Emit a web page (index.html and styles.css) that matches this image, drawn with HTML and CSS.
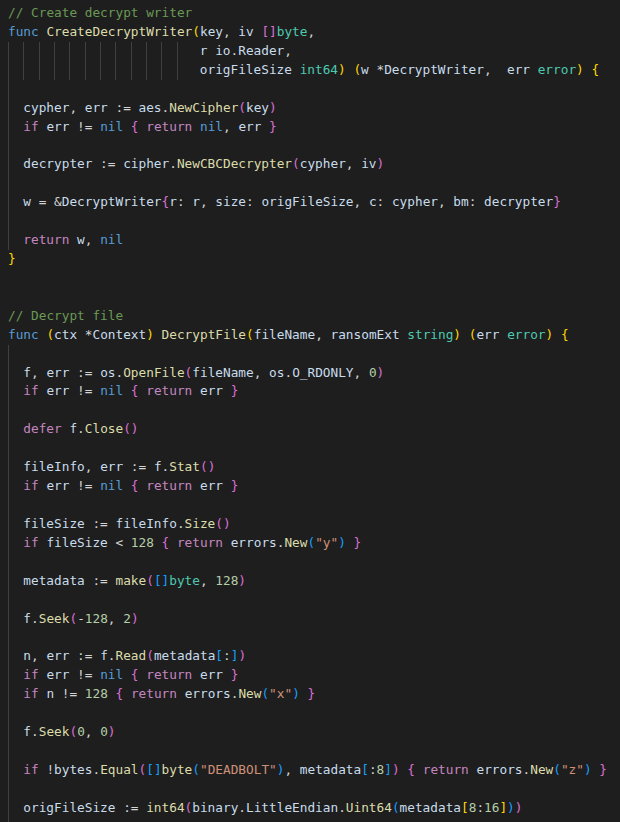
FILE: index.html
```html
<!DOCTYPE html>
<html>
<head>
<meta charset="utf-8">
<link rel="stylesheet" href="styles.css">
</head>
<body>
<div class="editor">
<div class="ln"><span class="c">// Create decrypt writer</span></div>
<div class="ln"><span class="k">func</span> <span class="f">CreateDecryptWriter</span><span class="b1">(</span><span class="v">key</span>, <span class="v">iv</span> <span class="b2">[]</span><span class="t">byte</span>,</div>
<div class="ln"><i class="g"></i><i class="g"></i><i class="g"></i><i class="g"></i><i class="g"></i><i class="g"></i><i class="g"></i><i class="g"></i><i class="g"></i><i class="g"></i><i class="g"></i><i class="g"></i> <span class="v">r</span> <span class="v">io</span>.<span class="v">Reader</span>,</div>
<div class="ln"><i class="g"></i><i class="g"></i><i class="g"></i><i class="g"></i><i class="g"></i><i class="g"></i><i class="g"></i><i class="g"></i><i class="g"></i><i class="g"></i><i class="g"></i><i class="g"></i> <span class="v">origFileSize</span> <span class="t">int64</span><span class="b1">)</span> <span class="b1">(</span><span class="v">w</span> *<span class="v">DecryptWriter</span>,  <span class="v">err</span> <span class="t">error</span><span class="b1">)</span> <span class="b1">{</span></div>
<div class="ln"><i class="g"></i></div>
<div class="ln"><i class="g"></i><span class="v">cypher</span>, <span class="v">err</span> := <span class="v">aes</span>.<span class="f">NewCipher</span><span class="b2">(</span><span class="v">key</span><span class="b2">)</span></div>
<div class="ln"><i class="g"></i><span class="x">if</span> <span class="v">err</span> != <span class="k">nil</span> <span class="b2">{</span> <span class="x">return</span> <span class="k">nil</span>, <span class="v">err</span> <span class="b2">}</span></div>
<div class="ln"><i class="g"></i></div>
<div class="ln"><i class="g"></i><span class="v">decrypter</span> := <span class="v">cipher</span>.<span class="f">NewCBCDecrypter</span><span class="b2">(</span><span class="v">cypher</span>, <span class="v">iv</span><span class="b2">)</span></div>
<div class="ln"><i class="g"></i></div>
<div class="ln"><i class="g"></i><span class="v">w</span> = &amp;<span class="v">DecryptWriter</span><span class="b2">{</span><span class="v">r</span>: <span class="v">r</span>, <span class="v">size</span>: <span class="v">origFileSize</span>, <span class="v">c</span>: <span class="v">cypher</span>, <span class="v">bm</span>: <span class="v">decrypter</span><span class="b2">}</span></div>
<div class="ln"><i class="g"></i></div>
<div class="ln"><i class="g"></i><span class="x">return</span> <span class="v">w</span>, <span class="k">nil</span></div>
<div class="ln"><span class="b1">}</span></div>
<div class="ln"></div>
<div class="ln"></div>
<div class="ln"><span class="c">// Decrypt file</span></div>
<div class="ln"><span class="k">func</span> <span class="b1">(</span><span class="v">ctx</span> *<span class="v">Context</span><span class="b1">)</span> <span class="f">DecryptFile</span><span class="b1">(</span><span class="v">fileName</span>, <span class="v">ransomExt</span> <span class="t">string</span><span class="b1">)</span> <span class="b1">(</span><span class="v">err</span> <span class="t">error</span><span class="b1">)</span> <span class="b1">{</span></div>
<div class="ln"><i class="g"></i></div>
<div class="ln"><i class="g"></i><span class="v">f</span>, <span class="v">err</span> := <span class="v">os</span>.<span class="f">OpenFile</span><span class="b2">(</span><span class="v">fileName</span>, <span class="v">os</span>.<span class="v">O_RDONLY</span>, <span class="n">0</span><span class="b2">)</span></div>
<div class="ln"><i class="g"></i><span class="x">if</span> <span class="v">err</span> != <span class="k">nil</span> <span class="b2">{</span> <span class="x">return</span> <span class="v">err</span> <span class="b2">}</span></div>
<div class="ln"><i class="g"></i></div>
<div class="ln"><i class="g"></i><span class="x">defer</span> <span class="v">f</span>.<span class="f">Close</span><span class="b2">()</span></div>
<div class="ln"><i class="g"></i></div>
<div class="ln"><i class="g"></i><span class="v">fileInfo</span>, <span class="v">err</span> := <span class="v">f</span>.<span class="f">Stat</span><span class="b2">()</span></div>
<div class="ln"><i class="g"></i><span class="x">if</span> <span class="v">err</span> != <span class="k">nil</span> <span class="b2">{</span> <span class="x">return</span> <span class="v">err</span> <span class="b2">}</span></div>
<div class="ln"><i class="g"></i></div>
<div class="ln"><i class="g"></i><span class="v">fileSize</span> := <span class="v">fileInfo</span>.<span class="f">Size</span><span class="b2">()</span></div>
<div class="ln"><i class="g"></i><span class="x">if</span> <span class="v">fileSize</span> &lt; <span class="n">128</span> <span class="b2">{</span> <span class="x">return</span> <span class="v">errors</span>.<span class="f">New</span><span class="b3">(</span><span class="s">"y"</span><span class="b3">)</span> <span class="b2">}</span></div>
<div class="ln"><i class="g"></i></div>
<div class="ln"><i class="g"></i><span class="v">metadata</span> := <span class="f">make</span><span class="b2">(</span><span class="b3">[]</span><span class="t">byte</span>, <span class="n">128</span><span class="b2">)</span></div>
<div class="ln"><i class="g"></i></div>
<div class="ln"><i class="g"></i><span class="v">f</span>.<span class="f">Seek</span><span class="b2">(</span>-<span class="n">128</span>, <span class="n">2</span><span class="b2">)</span></div>
<div class="ln"><i class="g"></i></div>
<div class="ln"><i class="g"></i><span class="v">n</span>, <span class="v">err</span> := <span class="v">f</span>.<span class="f">Read</span><span class="b2">(</span><span class="v">metadata</span><span class="b3">[</span>:<span class="b3">]</span><span class="b2">)</span></div>
<div class="ln"><i class="g"></i><span class="x">if</span> <span class="v">err</span> != <span class="k">nil</span> <span class="b2">{</span> <span class="x">return</span> <span class="v">err</span> <span class="b2">}</span></div>
<div class="ln"><i class="g"></i><span class="x">if</span> <span class="v">n</span> != <span class="n">128</span> <span class="b2">{</span> <span class="x">return</span> <span class="v">errors</span>.<span class="f">New</span><span class="b3">(</span><span class="s">"x"</span><span class="b3">)</span> <span class="b2">}</span></div>
<div class="ln"><i class="g"></i></div>
<div class="ln"><i class="g"></i><span class="v">f</span>.<span class="f">Seek</span><span class="b2">(</span><span class="n">0</span>, <span class="n">0</span><span class="b2">)</span></div>
<div class="ln"><i class="g"></i></div>
<div class="ln"><i class="g"></i><span class="x">if</span> !<span class="v">bytes</span>.<span class="f">Equal</span><span class="b2">(</span><span class="b3">[]</span><span class="f">byte</span><span class="b3">(</span><span class="s">"DEADBOLT"</span><span class="b3">)</span>, <span class="v">metadata</span><span class="b3">[</span>:<span class="n">8</span><span class="b3">]</span><span class="b2">)</span> <span class="b2">{</span> <span class="x">return</span> <span class="v">errors</span>.<span class="f">New</span><span class="b3">(</span><span class="s">"z"</span><span class="b3">)</span> <span class="b2">}</span></div>
<div class="ln"><i class="g"></i></div>
<div class="ln"><i class="g"></i><span class="v">origFileSize</span> := <span class="f">int64</span><span class="b2">(</span><span class="v">binary</span>.<span class="v">LittleEndian</span>.<span class="f">Uint64</span><span class="b3">(</span><span class="v">metadata</span><span class="b1">[</span><span class="n">8</span>:<span class="n">16</span><span class="b1">]</span><span class="b3">)</span><span class="b2">)</span></div>
<div class="ln"><i class="g"></i></div>
</div>
</body>
</html>
```
FILE: styles.css
```css
html, body {
  margin: 0;
  padding: 0;
  background: #1e1e1e;
}

.editor {
  padding: 4px 0 0 8px;
  font-family: "DejaVu Sans Mono", "Liberation Mono", monospace;
  font-size: 12.75px;
  line-height: 18.93px;
  color: #d4d4d4;
}

.ln {
  height: 18.93px;
  white-space: pre;
}

.g {
  display: inline-block;
  width: 2ch;
  height: 18.93px;
  vertical-align: top;
  box-shadow: inset 1px 0 0 #404040;
}

.c { color: #6a9955; }
.k { color: #569cd6; }
.x { color: #c586c0; }
.f { color: #dcdcaa; }
.t { color: #4ec9b0; }
.v { color: #c8dcec; }
.n { color: #b5cea8; }
.s { color: #ce9178; }
.b1 { color: #ffd700; }
.b2 { color: #da70d6; }
.b3 { color: #179fff; }
```
